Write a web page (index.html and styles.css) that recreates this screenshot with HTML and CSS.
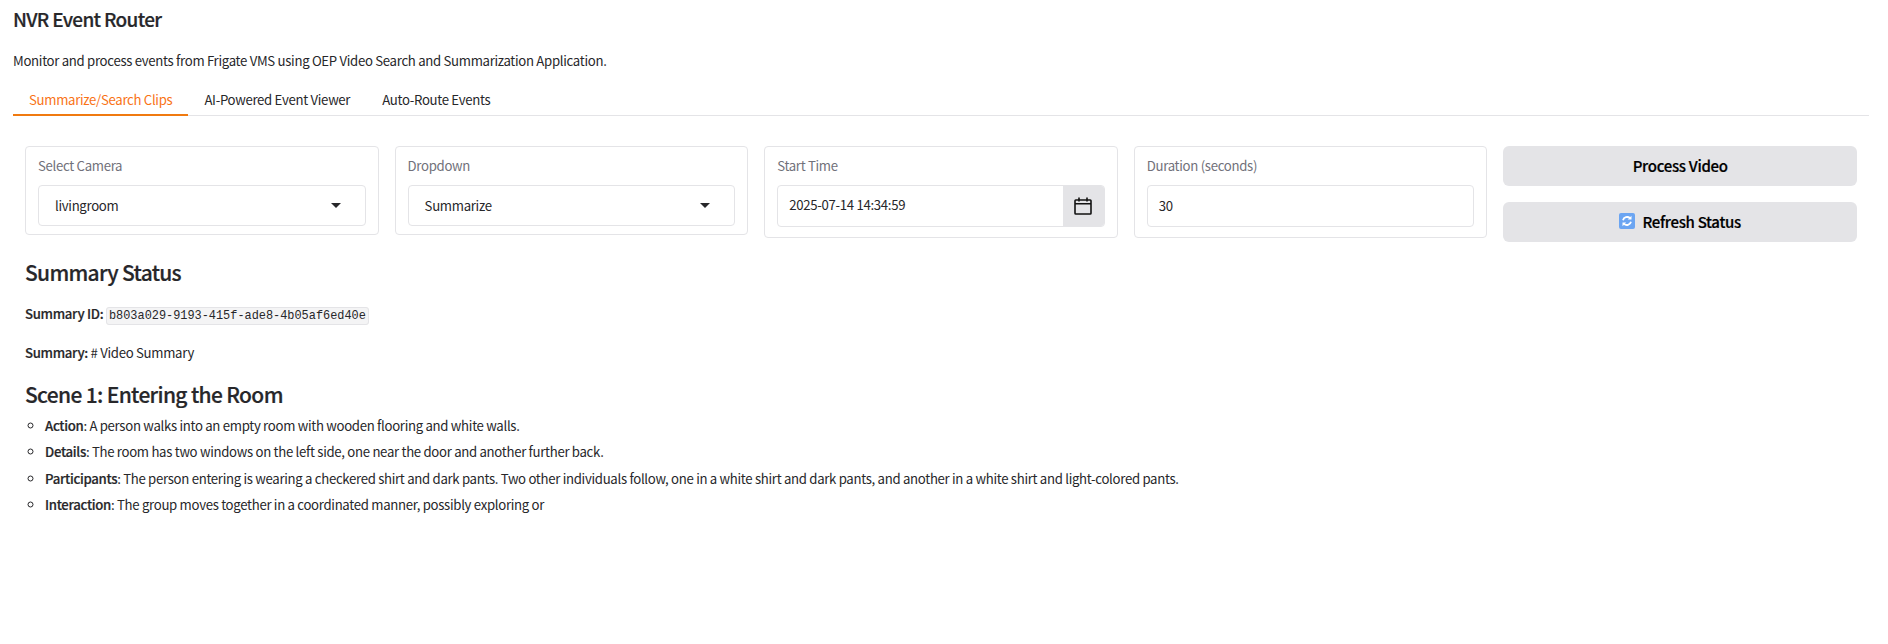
FILE: index.html
```html
<!DOCTYPE html>
<html lang="en">
<head>
<meta charset="utf-8">
<title>NVR Event Router</title>
<link rel="stylesheet" href="styles.css">
</head>
<body>
<main class="app">
  <h1 class="title">NVR Event Router</h1>
  <p class="lead">Monitor and process events from Frigate VMS using OEP Video Search and Summarization Application.</p>
  <nav class="tabs">
    <button class="tab active">Summarize/Search Clips</button>
    <button class="tab">AI-Powered Event Viewer</button>
    <button class="tab">Auto-Route Events</button>
  </nav>
  <section class="panel">
    <div class="controls">
      <div class="field">
        <label class="label">Select Camera</label>
        <div class="select"><span>livingroom</span><svg class="caret" viewBox="0 0 10 5"><path d="M0 0h10L5 5z"/></svg></div>
      </div>
      <div class="field">
        <label class="label">Dropdown</label>
        <div class="select"><span>Summarize</span><svg class="caret" viewBox="0 0 10 5"><path d="M0 0h10L5 5z"/></svg></div>
      </div>
      <div class="field tall">
        <label class="label">Start Time</label>
        <div class="date">
          <span class="date-text">2025-07-14 14:34:59</span>
          <span class="date-btn">
            <svg class="cal" viewBox="0 0 18 18" fill="none" stroke="#111" stroke-width="1.6"><rect x="1" y="3" width="16" height="14" rx="0.8"/><path d="M1 6.800h16M5 .6v3.800M13 .6v3.800"/></svg>
          </span>
        </div>
      </div>
      <div class="field tall">
        <label class="label">Duration (seconds)</label>
        <div class="input">30</div>
      </div>
      <div class="actions">
        <button class="btn">Process Video</button>
        <button class="btn">
          <svg class="refresh" viewBox="0 0 16 16"><rect width="16" height="16" rx="2" fill="#6ba5f2"/><path d="M4 7.200a4.200 4.200 0 0 1 7-2M12 8.800a4.200 4.200 0 0 1-7 2" fill="none" stroke="#fff" stroke-width="1.800"/><path d="M12.500 2.800v3.700H8.800zM3.500 13.200V9.500h3.700z" fill="#fff"/></svg>
          Refresh Status
        </button>
      </div>
    </div>
    <article class="output">
      <h2 class="h-status">Summary Status</h2>
      <p class="p-id"><strong>Summary ID:</strong> <code class="code">b803a029-9193-415f-ade8-4b05af6ed40e</code></p>
      <p class="p-sum"><strong>Summary:</strong> # Video Summary</p>
      <h3 class="h-scene">Scene 1: Entering the Room</h3>
      <ul class="list">
        <li><strong>Action</strong>: A person walks into an empty room with wooden flooring and white walls.</li>
        <li><strong>Details</strong>: The room has two windows on the left side, one near the door and another further back.</li>
        <li><strong>Participants</strong>: The person entering is wearing a checkered shirt and dark pants. Two other individuals follow, one in a white shirt and dark pants, and another in a white shirt and light-colored pants.</li>
        <li><strong>Interaction</strong>: The group moves together in a coordinated manner, possibly exploring or</li>
      </ul>
    </article>
  </section>
</main>
</body>
</html>
```

FILE: styles.css
```css
* { box-sizing: border-box; }
html, body { margin: 0; background: #fff; }
body {
  font-family: "Noto Sans CJK SC", "Noto Sans", sans-serif;
  font-size: 13.2px;
  letter-spacing: -0.31px;
  color: #27272a;
  height: 644px;
  overflow: hidden;
}
.app { padding: 0 19px 0 13px; }
.title { margin: 0; padding-top: 7px; font-size: 19px; letter-spacing: -0.68px; line-height: 24px; font-weight: 500; color: #27272a; -webkit-text-stroke: 0.2px; }
.lead { margin: 20px 0 0; line-height: 20px; }
.tabs { display: flex; margin-top: 13px; height: 32px; border-bottom: 1px solid #e4e4e7; }
.tab { background: none; border: 0; padding: 0 16px 2px; height: 32px; font: inherit; letter-spacing: inherit; color: #27272a; }
.tab.active { color: #f97316; border-bottom: 2px solid #f07a10; padding-bottom: 0; }
.panel { padding: 30px 12px 0; }
.controls { display: grid; grid-template-columns: repeat(5, 1fr); gap: 16px; align-items: start; }
.field { border: 1px solid #e4e4e7; border-radius: 4px; height: 89px; padding: 11px 12px 12px; }
.field.tall { height: 92px; }
.label { display: block; height: 27px; line-height: 16px; color: #71717a; }
.select, .input { height: 41px; border: 1px solid #e4e4e7; border-radius: 4px; display: flex; align-items: center; }
.select { justify-content: space-between; padding: 0 24px 0 16px; }
.input { height: 42px; padding: 0 11px 2px; }
.caret { width: 10px; height: 5px; fill: #27272a; }
.date { display: flex; height: 42px; border: 1px solid #e4e4e7; border-radius: 4px; overflow: hidden; }
.date-text { flex: 1; padding: 0 11px; line-height: 38px; }
.date-btn { width: 41px; background: #e4e4e7; display: flex; align-items: center; justify-content: center; }
.cal { width: 18px; height: 18px; }
.actions { display: flex; flex-direction: column; gap: 16px; }
.btn { height: 40px; border: 0; border-radius: 6px; background: #e4e4e7; font: inherit; font-size: 15px; letter-spacing: -0.3px; font-weight: 500; color: #000; display: flex; align-items: center; justify-content: center; gap: 7px; padding: 0 0 2px; -webkit-text-stroke: 0.2px; }
.refresh { width: 16px; height: 16px; }
.output { margin-top: 14px; }
.h-status { margin: 0; font-size: 21px; letter-spacing: -0.7px; line-height: 32px; font-weight: 500; -webkit-text-stroke: 0.2px; }
.p-id { margin: 14px 0 0; line-height: 24px; }
.p-sum { margin: 13px 0 0; line-height: 24px; }
strong { font-weight: 500; -webkit-text-stroke: 0.2px; }
.code { font-family: "Liberation Mono", monospace; font-size: 11.9px; letter-spacing: 0; background: #f4f4f5; border: 1px solid #e4e4e7; border-radius: 3px; padding: 1px 2px; }
.h-scene { margin: 14px 0 0; font-size: 21px; letter-spacing: -0.66px; line-height: 30px; font-weight: 500; -webkit-text-stroke: 0.2px; }
.list { margin: 7px 0 0; padding: 0 0 0 20px; list-style: circle; }
.list li { line-height: 20px; margin-bottom: 6.400px; }
```
